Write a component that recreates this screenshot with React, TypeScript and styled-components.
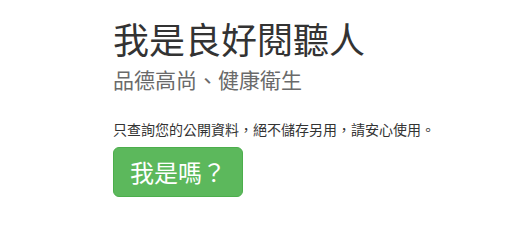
import React from 'react';
import styled, { createGlobalStyle } from 'styled-components';

const GlobalStyle = createGlobalStyle`
    html, body {
        margin: 0;
        padding: 0;
        background: #ffffff;
    }
    body {
        font-family: "Noto Sans CJK TC", "Noto Sans", sans-serif;
        color: #333333;
    }
`;

const Page = styled.div`
    padding: 18px 0 0 113px;
`;

const Tittel = styled.h1`
    margin: 0;
    font-size: 36px;
    font-weight: 400;
    line-height: 40px;
    color: #333333;
`;

const Undertittel = styled.h3`
    margin: 7px 0 0 0;
    font-size: 21px;
    font-weight: 400;
    line-height: 28px;
    color: #6a6a6a;
`;

const Merknad = styled.p`
    margin: 26px 0 0 0;
    font-size: 14px;
    line-height: 20px;
    color: #333333;
`;

const GrønnKnapp = styled.button`
    margin-top: 8px;
    display: inline-flex;
    align-items: center;
    justify-content: center;
    height: 50px;
    padding: 0 16px;
    font-family: inherit;
    font-size: 24px;
    line-height: 30px;
    color: #ffffff;
    background-color: #5cb85c;
    border: 1px solid #4cae4c;
    border-radius: 6px;
    cursor: pointer;
`;

export default function App() {
    return (
        <>
            <GlobalStyle />
            <Page>
                <Tittel>我是良好閱聽人</Tittel>
                <Undertittel>品德高尚、健康衛生</Undertittel>
                <Merknad>只查詢您的公開資料，絕不儲存另用，請安心使用。</Merknad>
                <GrønnKnapp>我是嗎？</GrønnKnapp>
            </Page>
        </>
    );
}
